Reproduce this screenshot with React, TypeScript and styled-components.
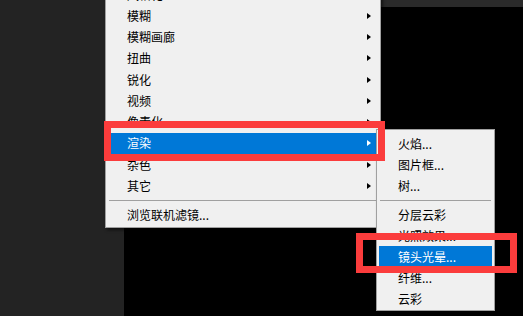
import React from 'react';
import styled, { createGlobalStyle } from 'styled-components';

const GlobalStyle = createGlobalStyle`
  html, body {
    margin: 0;
    padding: 0;
    background: #000;
  }
  body {
    font-family: 'Noto Sans CJK SC', 'Liberation Sans', sans-serif;
    font-size: 12px;
  }
`;

const Screen = styled.div`
  position: relative;
  display: flex;
  width: 523px;
  height: 316px;
  overflow: hidden;
  background: #000;
`;

const SidePanel = styled.div`
  width: 124px;
  background: #232323;
`;

const Canvas = styled.div`
  flex: 1;
  display: flex;
  flex-direction: column;
`;

const TopStrip = styled.div`
  height: 7px;
  background: #2a2a2a;
`;

const Work = styled.div`
  flex: 1;
  background: #000;
`;

const Menu = styled.div<{ $left: number; $top: number; $width: number }>`
  position: absolute;
  left: ${p => p.$left}px;
  top: ${p => p.$top}px;
  width: ${p => p.$width}px;
  box-sizing: border-box;
  display: flex;
  flex-direction: column;
  padding: 3px 0 1px;
  background: #f0f0f0;
  border: 1px solid #a0a0a0;
  box-shadow: 2px 2px 3px rgba(0, 0, 0, 0.55);
`;

const Item = styled.div<{ $active?: boolean; $height: number }>`
  display: flex;
  align-items: center;
  height: ${p => p.$height}px;
  margin: 0 2px;
  padding-left: 19px;
  color: ${p => (p.$active ? '#fff' : '#000')};
  background: ${p => (p.$active ? '#0078d7' : 'transparent')};
  white-space: nowrap;
  line-height: 1;
`;

const Arrow = styled.span<{ $active?: boolean }>`
  margin-left: auto;
  margin-right: 7px;
  width: 0;
  height: 0;
  border-top: 3.5px solid transparent;
  border-bottom: 3.5px solid transparent;
  border-left: 4px solid ${p => (p.$active ? '#fff' : '#000')};
`;

const Separator = styled.div`
  display: flex;
  align-items: center;
  height: 8px;
  margin: 0 3px;
  &::after {
    content: '';
    flex: 1;
    height: 1px;
    background: #a0a0a0;
  }
`;

// annotation frames drawn over the screenshot
const RedFrame = styled.div<{ $left: number; $top: number; $width: number; $height: number }>`
  position: absolute;
  left: ${p => p.$left}px;
  top: ${p => p.$top}px;
  width: ${p => p.$width}px;
  height: ${p => p.$height}px;
  box-sizing: border-box;
  border: 7px solid #fb3c3c;
`;

type Entry = { label: string; active?: boolean; sub?: boolean } | 'sep';

const filterMenu: Entry[] = [
  { label: '风格化', sub: true },
  { label: '模糊', sub: true },
  { label: '模糊画廊', sub: true },
  { label: '扭曲', sub: true },
  { label: '锐化', sub: true },
  { label: '视频', sub: true },
  { label: '像素化', sub: true },
  { label: '渲染', sub: true, active: true },
  { label: '杂色', sub: true },
  { label: '其它', sub: true },
  'sep',
  { label: '浏览联机滤镜...' },
];

const renderMenu: Entry[] = [
  { label: '火焰...' },
  { label: '图片框...' },
  { label: '树...' },
  'sep',
  { label: '分层云彩' },
  { label: '光照效果...' },
  { label: '镜头光晕...', active: true },
  { label: '纤维...' },
  { label: '云彩' },
];

const MenuList = ({ entries, rowHeight }: { entries: Entry[]; rowHeight: number }) => (
  <>
    {entries.map((entry, i) =>
      entry === 'sep' ? (
        <Separator key={i} />
      ) : (
        <Item key={i} $active={entry.active} $height={rowHeight}>
          {entry.label}
          {entry.sub && <Arrow $active={entry.active} />}
        </Item>
      )
    )}
  </>
);

const App = () => (
  <>
    <GlobalStyle />
    <Screen>
      <SidePanel />
      <Canvas>
        <TopStrip />
        <Work />
      </Canvas>

      <Menu $left={105} $top={-20} $width={276}>
        <MenuList entries={filterMenu} rowHeight={21.25} />
      </Menu>

      <Menu $left={376} $top={129} $width={119}>
        <MenuList entries={renderMenu} rowHeight={21} />
      </Menu>

      <RedFrame $left={104} $top={121} $width={281} $height={40} />
      <RedFrame $left={356} $top={233} $width={161} $height={40} />
    </Screen>
  </>
);

export default App;
